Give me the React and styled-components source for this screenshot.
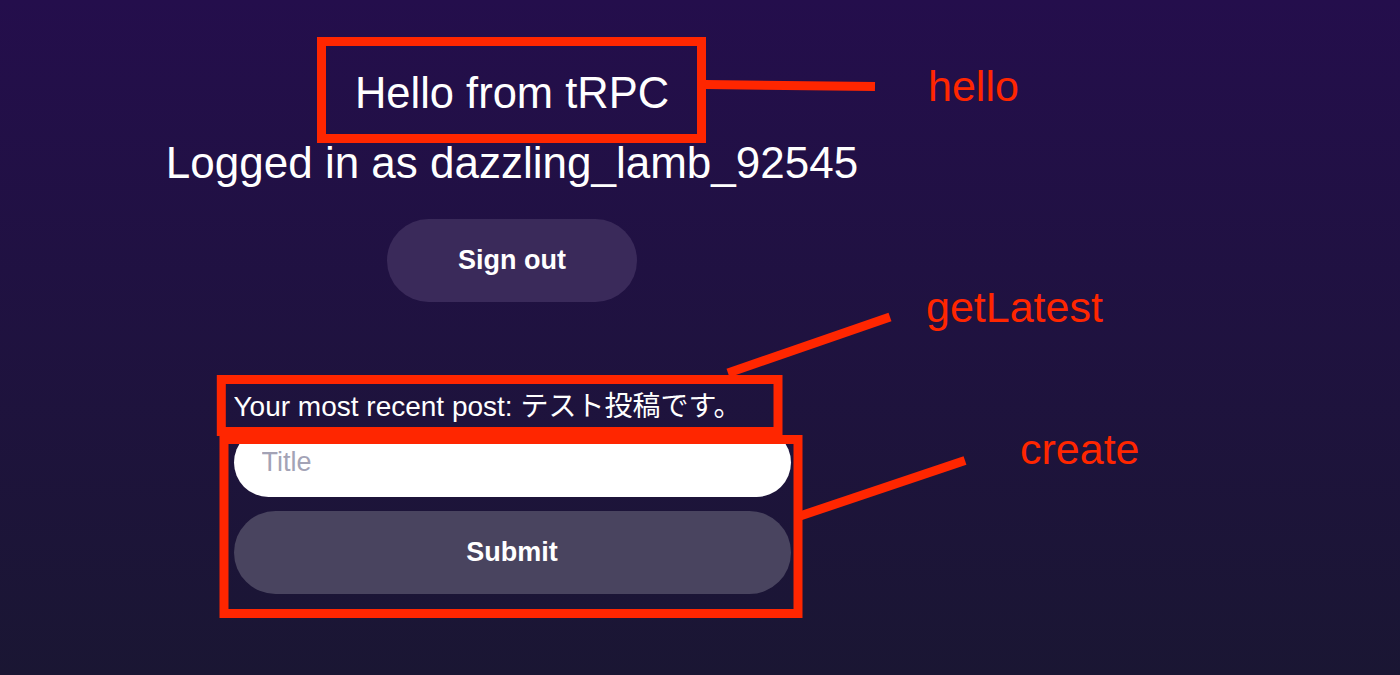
import React from "react";
import styled, { createGlobalStyle } from "styled-components";

const GlobalStyle = createGlobalStyle`
  html, body {
    margin: 0;
    padding: 0;
  }
  body {
    font-family: "Liberation Sans", "Noto Sans CJK JP", sans-serif;
    color: #fff;
  }
`;

const Page = styled.main`
  position: relative;
  width: 100%;
  height: 675px;
  overflow: hidden;
  background: linear-gradient(180deg, #240e4c 0%, #1a1633 100%);
`;

const Column = styled.div`
  width: 1024px;
  padding-top: 69px;
  display: flex;
  flex-direction: column;
  align-items: center;
`;

const Heading = styled.p`
  margin: 0;
  font-size: ${(p) => p.$size || "43.5px"};
  line-height: 48px;
  font-weight: 400;
  color: #fff;
  & + & {
    margin-top: 22px;
  }
`;

const PillButton = styled.button`
  border: none;
  border-radius: 999px;
  height: 83px;
  width: ${(p) => p.$width || "100%"};
  margin-top: ${(p) => p.$top || 0};
  background: ${(p) => p.$bg};
  color: #fff;
  font-family: "Liberation Sans", sans-serif;
  font-size: 27px;
  font-weight: 700;
  cursor: pointer;
`;

const Latest = styled.section`
  width: 557px;
  margin-top: 84px;
`;

const RecentPost = styled.p`
  margin: 0;
  font-size: 28px;
  line-height: 42px;
  white-space: nowrap;
  overflow: hidden;
  text-overflow: ellipsis;
`;

const Form = styled.form`
  display: flex;
  flex-direction: column;
  gap: 14px;
`;

const TitleInput = styled.input`
  box-sizing: border-box;
  width: 100%;
  height: 69px;
  border: none;
  border-radius: 999px;
  padding: 0 28px;
  background: #fff;
  color: #000;
  font-family: "Liberation Sans", sans-serif;
  font-size: 27px;
  outline: none;
  &::placeholder {
    color: #a3a3b6;
  }
`;

/* annotation layer drawn over the screenshot */
const Overlay = styled.svg`
  position: absolute;
  inset: 0;
  pointer-events: none;
`;

const Label = styled.span`
  position: absolute;
  left: ${(p) => p.$x}px;
  top: ${(p) => p.$y}px;
  font-family: "Liberation Sans", sans-serif;
  font-size: 43px;
  line-height: 1;
  color: #ff2600;
  white-space: nowrap;
`;

const RED = "#ff2600";

const Annotations = () => (
  <>
    <Overlay width="1400" height="675" viewBox="0 0 1400 675">
      <g fill="none" stroke={RED} strokeWidth="9">
        <rect x="321.5" y="41.5" width="380" height="97" />
        <line x1="705" y1="84.5" x2="875" y2="86.5" />
        <rect x="221.3" y="379.5" width="556.7" height="52" />
        <line x1="728" y1="373" x2="890" y2="317" />
        <rect x="224" y="439.5" width="574" height="174" />
        <line x1="800" y1="516" x2="965" y2="460.5" />
      </g>
    </Overlay>
    <Label $x={928} $y={65}>hello</Label>
    <Label $x={926} $y={286}>getLatest</Label>
    <Label $x={1020} $y={428}>create</Label>
  </>
);

export default function App() {
  return (
    <>
      <GlobalStyle />
      <Page>
        <Column>
          <Heading>Hello from tRPC</Heading>
          <Heading $size="44px">Logged in as dazzling_lamb_92545</Heading>
          <PillButton $width="250px" $top="32px" $bg="#3a2a5a">
            Sign out
          </PillButton>
          <Latest>
            <RecentPost>Your most recent post: テスト投稿です。</RecentPost>
            <Form onSubmit={(e) => e.preventDefault()}>
              <TitleInput type="text" placeholder="Title" />
              <PillButton type="submit" $bg="#49445f">
                Submit
              </PillButton>
            </Form>
          </Latest>
        </Column>
        <Annotations />
      </Page>
    </>
  );
}
